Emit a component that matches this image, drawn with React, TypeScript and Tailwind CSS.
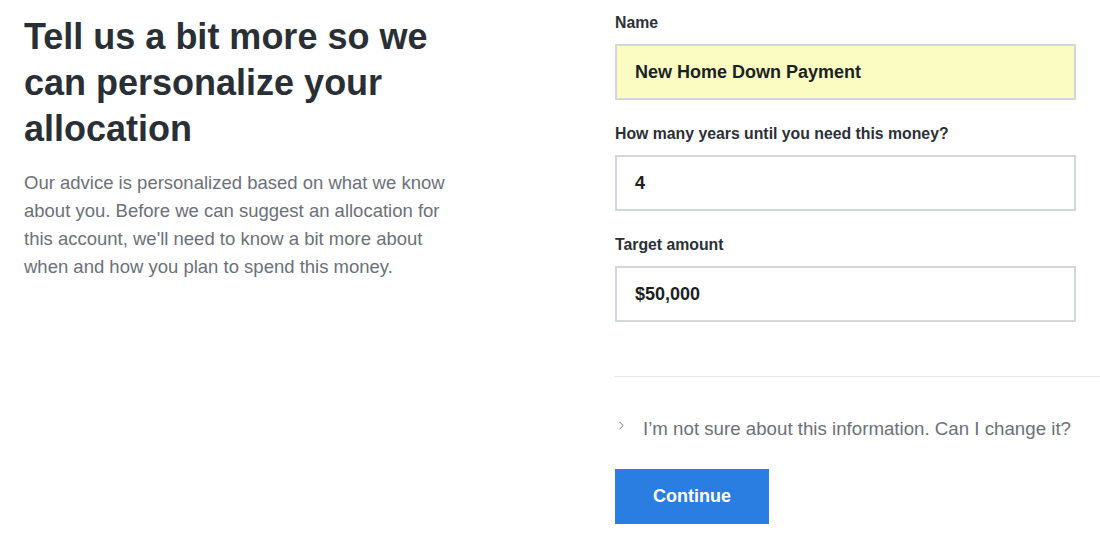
import { ChevronRight } from 'lucide-react'

const font = { fontFamily: '"Liberation Sans", Arial, sans-serif' }

function Field({ label, value, highlight }: { label: string; value: string; highlight?: boolean }) {
  return (
    <div className="flex flex-col">
      <label className="text-[15.8px] font-bold leading-[20px] text-[#2b2f36]">{label}</label>
      <div
        className={
          'mt-[11px] h-[56px] w-[461px] border-2 border-[#d3d6da] flex items-center pl-[18px] text-[18px] font-bold text-[#1c1f24] ' +
          (highlight ? 'bg-[#fafcc2]' : 'bg-white')
        }
      >
        {value}
      </div>
    </div>
  )
}

export default function App() {
  return (
    <div className="w-[1100px] h-[544px] bg-white flex" style={font}>
      {/* Intro */}
      <div className="w-[615px] shrink-0 pl-[24px] pt-[14px]">
        <h1 className="text-[36px] font-bold leading-[46px] text-[#2a2f36] w-[440px]">
          Tell us a bit more so we can personalize your allocation
        </h1>
        <p className="mt-[17px] text-[18.5px] leading-[28px] text-[#6c7079] w-[436px]">
          Our advice is personalized based on what we know about you. Before we can suggest an allocation for
          this account, we'll need to know a bit more about when and how you plan to spend this money.
        </p>
      </div>

      {/* Form */}
      <div className="flex-1 pt-[13px] flex flex-col">
        <div className="flex flex-col gap-[24px]">
          <Field label="Name" value="New Home Down Payment" highlight />
          <Field label="How many years until you need this money?" value="4" />
          <Field label="Target amount" value="$50,000" />
        </div>

        <div className="mt-[54px] border-t border-[#e6e8eb]" />

        <div className="mt-[38px] flex items-center">
          <ChevronRight className="w-[13px] h-[13px] text-[#4a4f57] -mt-[8px]" strokeWidth={1.5} />
          <span className="ml-[15px] text-[18.7px] text-[#6c7079]">I’m not sure about this information. Can I change it?</span>
        </div>

        <button className="mt-[26px] w-[154px] h-[55px] bg-[#2a7de1] text-white text-[18px] font-bold">
          Continue
        </button>
      </div>
    </div>
  )
}
